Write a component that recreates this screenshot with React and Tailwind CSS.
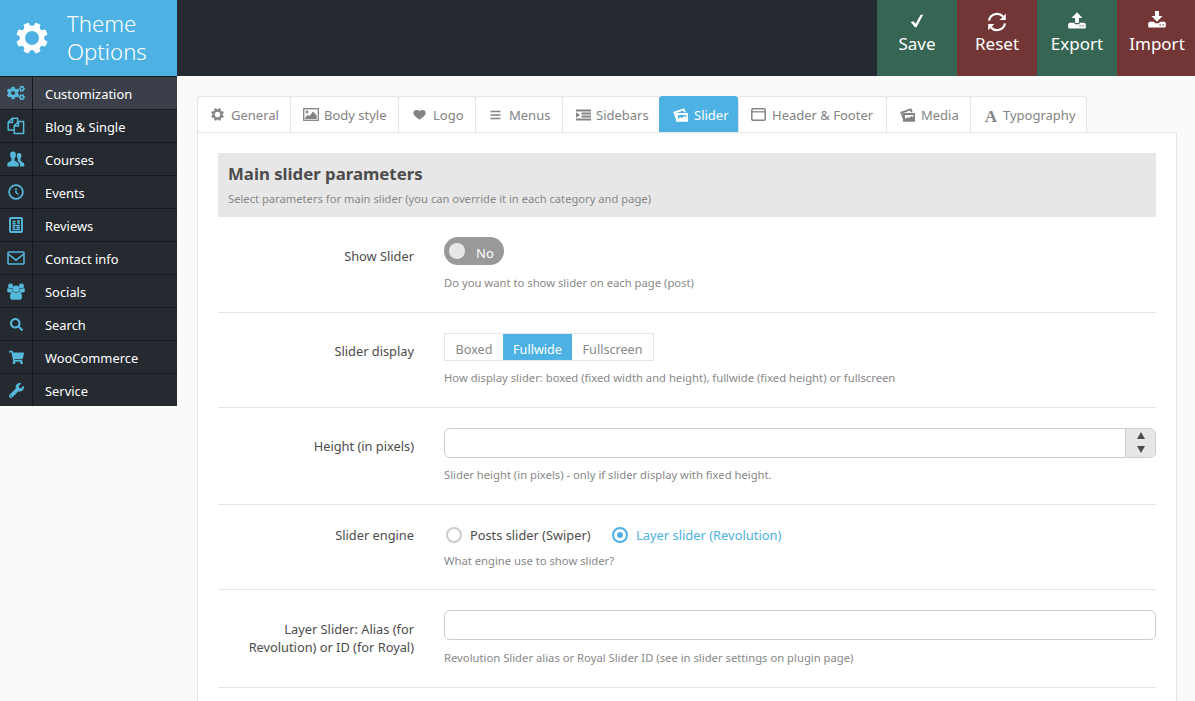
import React from "react";
import { FaCogs, FaSearch, FaShoppingCart, FaWrench } from "react-icons/fa";

const teeth = [22.5, 67.5, 112.5, 157.5, 202.5, 247.5, 292.5, 337.5];

function Gear({ className }) {
  return (
    <svg viewBox="-16 -16 32 32" className={className} fill="currentColor">
      <circle r="9.6" fill="none" stroke="currentColor" strokeWidth="5.200" />
      {teeth.map((a) => (
        <path key={a} transform={`rotate(${a})`} d="M-4.200-11L-2.800-13.200L-3-15.300Q0-16.400 3-15.300L2.800-13.200L4.200-11Z" />
      ))}
    </svg>
  );
}

function Files({ className }) {
  return (
    <svg viewBox="0 0 18 18" className={className} fill="none" stroke="currentColor" strokeWidth="1.5" strokeLinejoin="round">
      <path d="M7 13H1.2V5.3L5.3 1.2H10.6V4.4M5.5 1.4V5.4H1.4" />
      <path d="M11.4 4.6H16.6V16.4H7.2V8.8ZM11.5 4.8V9H7.4" />
    </svg>
  );
}

function TwoUsers({ className }) {
  return (
    <svg viewBox="0 0 18 16" className={className} fill="currentColor">
      <path d="M6 .6C8.200.6 9 2.200 8.900 4.200C8.800 5.600 8.200 6.600 7.600 7.400V9.200C8 10.400 11.500 10.800 11.700 13V15.400H.4V13C.6 10.800 4 10.400 4.500 9.200V7.400C3.800 6.600 3.200 5.600 3.100 4.200C3 2.200 3.800.6 6 .6Z" />
      <path d="M12 2C13.900 2 14.500 3.200 14.400 5C14.300 6.200 13.900 7 13.400 7.700V9.500C13.900 10.700 17 11.200 17.300 13.200V15.400H12.900V13C12.800 11.200 11.300 10.500 10.200 9.900C10.700 9.500 10.900 9.200 10.900 8.700V7.700C10.300 7 9.900 6.200 9.800 5C9.700 3.200 10.300 2 12 2Z" />
    </svg>
  );
}

function Clock({ className }) {
  return (
    <svg viewBox="0 0 16 16" className={className} fill="none" stroke="currentColor" strokeWidth="1.700">
      <circle cx="8" cy="8" r="6.900" />
      <path d="M8 4V8.500L10.500 10.500" strokeWidth="1.300" />
    </svg>
  );
}

function Book({ className }) {
  return (
    <svg viewBox="0 0 14 16" className={className} fill="none" stroke="currentColor">
      <rect x="1" y="1" width="12" height="14" rx="1" strokeWidth="1.900" />
      <path d="M3.500 4.500H6.500M8 4H11M8 6H11M3.500 6.500H6.500M3.500 8.500H11M3.500 10.500H6M7.500 10.500H11M3.500 12.500H11" strokeWidth="1.300" />
    </svg>
  );
}

function Envelope({ className }) {
  return (
    <svg viewBox="0 0 18 14" className={className} fill="none" stroke="currentColor" strokeWidth="1.500" strokeLinejoin="round">
      <rect x="1" y="1" width="16" height="12" rx="1" />
      <path d="M1.200 3L9 9.200L16.800 3" />
    </svg>
  );
}

function Crowd({ className }) {
  return (
    <svg viewBox="0 0 18 17" className={className} fill="currentColor">
      <circle cx="3.600" cy="2.900" r="2.500" />
      <circle cx="14.400" cy="2.900" r="2.500" />
      <path d="M1.300 5Q3.600 6.600 5.300 5.400Q5.200 7.800 6.200 9.400H1.800Q.1 9.400.1 7.400Q.1 5 1.300 5ZM16.700 5Q14.400 6.600 12.700 5.400Q12.800 7.800 11.800 9.400H16.200Q17.900 9.400 17.900 7.400Q17.900 5 16.700 5Z" />
      <circle cx="9" cy="6" r="3.500" />
      <path d="M5.600 8.800Q9 11 12.400 8.800Q15 9.500 15 14Q15 16.800 12.600 16.800H5.400Q3 16.800 3 14Q3 9.500 5.600 8.800Z" />
    </svg>
  );
}

function Check({ className }) {
  return (
    <svg viewBox="0 0 14 14" className={className} fill="currentColor">
      <path d="M.7 7.900L3.600 7.300L5.500 9.800L10.500.9L13.300.6L6.500 13.200H4.900Z" />
    </svg>
  );
}

function Cycle({ className }) {
  return (
    <svg viewBox="0 0 20 20" className={className} fill="none" stroke="currentColor" strokeWidth="2.200">
      <path d="M2 8.600A8.100 8.100 0 0 1 16 4.600M18 11.400A8.100 8.100 0 0 1 4 15.400" />
      <path d="M18.800 1.800V8H12.600ZM1.200 18.200V12H7.400Z" fill="currentColor" stroke="none" />
    </svg>
  );
}

function Tray({ className, down }) {
  return (
    <svg viewBox="0 0 18 17" className={className} fill="currentColor">
      <path d={down ? "M7 0H11V5H14.500L9 10.800L3.500 5H7Z" : "M9 .2L14.500 6H11V11H7V6H3.500Z"} />
      <path fillRule="evenodd" d="M1.400 10.700H5.800L7.300 12.300H10.700L12.200 10.700H16.600L17.800 12V15.500Q17.800 16.500 16.800 16.500H1.200Q.2 16.500.2 15.500V12ZM11.500 13.300V14.500H12.700V13.300ZM14.500 13.300V14.500H15.700V13.300Z" />
    </svg>
  );
}

function Picture({ className }) {
  return (
    <svg viewBox="0 0 16 13" className={className} fill="currentColor">
      <rect x=".7" y=".7" width="14.600" height="11.600" fill="none" stroke="currentColor" strokeWidth="1.300" />
      <circle cx="4" cy="4" r="1.400" />
      <path d="M2.300 11V9L5 7L6.500 8L10 3.500L13.700 7.500V11Z" />
    </svg>
  );
}

function Heart({ className }) {
  return (
    <svg viewBox="0 0 14 12" className={className} fill="currentColor">
      <path d="M7 2C8 .3 11.500-.1 13 1.600C14.500 4 13 6.500 10.500 8.500C9 9.700 7.600 10.400 7 11.200C6.400 10.400 5 9.700 3.500 8.500C1 6.500-.5 4 1 1.600C2.500-.1 6 .3 7 2Z" />
    </svg>
  );
}

function Lines({ className }) {
  return (
    <svg viewBox="0 0 11 10" className={className} stroke="currentColor" strokeWidth="1.400">
      <path d="M.5 1.500H10.500M.5 5H10.500M.5 8.500H10.500" />
    </svg>
  );
}

function Indented({ className }) {
  return (
    <svg viewBox="0 0 15 12" className={className} fill="currentColor">
      <path d="M0 .5H15V2.500H0ZM5.500 3.500H15V5.500H5.500ZM5.500 6.500H15V8.500H5.500ZM0 9.500H15V11.500H0ZM0 3.200L4 6L0 8.800Z" />
    </svg>
  );
}

function Windowed({ className }) {
  return (
    <svg viewBox="0 0 15 13" className={className} fill="none" stroke="currentColor">
      <rect x=".8" y=".8" width="13.400" height="11.400" rx="1.200" strokeWidth="1.500" />
      <path d="M1 3.800H14" strokeWidth="1.300" />
    </svg>
  );
}

function Photos({ className }) {
  return (
    <svg viewBox="0 0 15 14" className={className} fill="currentColor">
      <path d="M.2 4L11.200.2L12.700 4.200H10.800L10.200 2.600L2.400 5.300L3 7V11.500Z" />
      <path fillRule="evenodd" d="M3 5H15V13.700H3ZM5 7V11L7.300 9.200L9.200 10L11.300 8L13.200 9.200V7Z" />
    </svg>
  );
}

function LetterA({ className }) {
  return <span className={`${className} pt-[3px] text-center font-['Liberation_Serif',serif] text-[17px] font-bold leading-[15px]`}>A</span>;
}

const menu = [
  ["Customization", FaCogs, "size-[18px]"],
  ["Blog & Single", Files, "size-[18px]"],
  ["Courses", TwoUsers, "h-4 w-[18px]"],
  ["Events", Clock, "size-4"],
  ["Reviews", Book, "h-4 w-[14px]"],
  ["Contact info", Envelope, "h-[14px] w-[18px]"],
  ["Socials", Crowd, "h-[17px] w-[18px]"],
  ["Search", FaSearch, "size-[13px]"],
  ["WooCommerce", FaShoppingCart, "size-[15px]"],
  ["Service", FaWrench, "size-[15px]"],
];

const actions = [
  ["Save", <Check className="mb-1 size-[14px]" />, "bg-[#366554]"],
  ["Reset", <Cycle className="size-5" />, "bg-[#733636]"],
  ["Export", <Tray className="mb-[3px] h-[17px] w-[18px]" />, "bg-[#366554]"],
  ["Import", <Tray down className="mb-1 h-[17px] w-[18px]" />, "bg-[#733636]"],
];

const tabs = [
  ["General", Gear, "size-[13px]", "w-[94px] -mr-px", "pl-[13px]", "gap-[7px]"],
  ["Body style", Picture, "h-[13px] w-4", "w-[109px] -mr-px", "pl-[12px]", "gap-[5px]"],
  ["Logo", Heart, "h-3 w-[13px]", "w-[78px] -mr-px", "pl-[14px]", "gap-[7px]"],
  ["Menus", Lines, "h-[10px] w-[11px]", "w-[88px] -mr-px", "pl-[14px]", "gap-[8px]"],
  ["Sidebars", Indented, "h-3 w-[15px]", "w-[98px] -mr-px", "pl-[13px]", "gap-[5px]"],
  ["Slider", Photos, "h-[14px] w-[15px]", "w-[79px]", "pl-[14px]", "gap-[6px]"],
  ["Header & Footer", Windowed, "h-[13px] w-[15px]", "w-[149px] -mr-px", "pl-[12px]", "gap-[6px]"],
  ["Media", Photos, "h-[14px] w-[15px]", "w-[85px] -mr-px", "pl-[13px]", "gap-[6px]"],
  ["Typography", LetterA, "w-[14px]", "w-[117px]", "pl-[13px]", "gap-[5px]"],
];

function Row({ label, height, labelTop, children, hint, hintTop }) {
  return (
    <section className={`flex border-b border-[#e5e5e5] ${height}`}>
      <div className={`w-[196px] shrink-0 text-right text-[12.8px] leading-[18px] text-[#4c4c4c] ${labelTop}`}>{label}</div>
      <div className="ml-[30px] flex-1 pt-5">
        {children}
        <p className={`text-[11.25px] leading-4 text-[#888] ${hintTop}`}>{hint}</p>
      </div>
    </section>
  );
}

export default function App() {
  return (
    <div className="flex h-[701px] w-[1195px] flex-col overflow-hidden bg-[#fafafa] font-['Noto_Sans',sans-serif]">
      <header className="flex h-[76px] shrink-0 bg-[#252932] text-white">
        <div className="flex w-[177px] items-center bg-[#4db2e3] pl-4">
          <Gear className="size-8" />
          <h1 className="ml-[19px] text-[22.2px] font-light leading-7">Theme<br />Options</h1>
        </div>
        <nav className="ml-auto flex w-[318px]">
          {actions.map(([label, icon, color]) => (
            <button key={label} className={`flex w-20 shrink-0 flex-col items-center ${color}`}>
              <span className="flex h-8 items-end">{icon}</span>
              <span className="text-[17px] leading-6">{label}</span>
            </button>
          ))}
        </nav>
      </header>
      <div className="flex min-h-0 flex-1">
        <aside className="h-[330px] w-[177px] bg-[#252930]">
          {menu.map(([label, Icon, size], i) => (
            <div key={label} className={`flex h-[33px] border-t border-[#17191c] ${i === 0 ? "bg-[#3a3f49]" : ""}`}>
              <span className="flex w-[33px] items-center justify-center border-r border-[#17191c] text-[#56b9dc]"><Icon className={size} /></span>
              <span className="pl-3 pt-2 text-[12.9px] leading-[18px] text-white">{label}</span>
            </div>
          ))}
        </aside>
        <main className="ml-5 mt-5 w-[980px]">
          <nav className="flex h-9">
            {tabs.map(([label, Icon, size, width, pad, gap]) => (
              <a
                key={label}
                className={`flex shrink-0 items-center whitespace-nowrap rounded-t-[3px] text-[13px] ${width} ${pad} ${gap} ${
                  label === "Slider" ? "z-10 bg-[#4db2e3] pt-px text-white" : "border border-b-0 border-[#e5e5e5] bg-white text-[#838383]"
                }`}
              >
                <Icon className={`shrink-0 ${size}`} />
                <span className="pt-0.5">{label}</span>
              </a>
            ))}
          </nav>
          <div className="h-[600px] border border-[#e5e5e5] bg-white p-5">
            <div className="h-16 bg-[#e7e7e7] px-[10px] pt-[9px]">
              <h2 className="text-[16.8px] font-bold leading-6 text-[#4c4c4c]">Main slider parameters</h2>
              <p className="pt-[5px] text-[11.2px] leading-4 text-[#888]">Select parameters for main slider (you can override it in each category and page)</p>
            </div>
            <Row label="Show Slider" height="h-24" labelTop="pt-[30px]" hintTop="mt-[10px]" hint="Do you want to show slider on each page (post)">
              <div className="flex h-7 w-[60px] items-center rounded-full bg-[#999] pl-[5px] text-[13px] text-white">
                <span className="size-4 rounded-full bg-[#e7e7e7]" />
                <span className="ml-[11px] pt-[3px] leading-[18px]">No</span>
              </div>
            </Row>
            <Row label="Slider display" height="h-[95px]" labelTop="pt-[29px]" hintTop="mt-[9px]" hint="How display slider: boxed (fixed width and height), fullwide (fixed height) or fullscreen">
              <div className="flex h-7 w-[210px] border border-[#e5e5e5] text-center text-[12.6px] leading-[31px] text-[#888]">
                <span className="w-[58px]">Boxed</span>
                <span className="h-[26px] w-[69px] bg-[#4db2e3] text-white">Fullwide</span>
                <span className="flex-1">Fullscreen</span>
              </div>
            </Row>
            <Row label="Height (in pixels)" height="h-[97px]" labelTop="pt-[29px]" hintTop="mt-[9px]" hint="Slider height (in pixels) - only if slider display with fixed height.">
              <div className="flex h-[30px] justify-end overflow-hidden rounded-md border border-[#ccc]">
                <div className="flex w-[30px] flex-col items-center justify-center gap-[7px] border-l border-[#ccc] bg-[#e7e7e7] pb-0.5 text-[#4c4c4c]">
                  <svg viewBox="0 0 8 7" className="h-[7px] w-2" fill="currentColor"><path d="M4 0L8 7H0Z" /></svg>
                  <svg viewBox="0 0 8 7" className="h-[7px] w-2" fill="currentColor"><path d="M0 0H8L4 7Z" /></svg>
                </div>
              </div>
            </Row>
            <Row label="Slider engine" height="h-[85px]" labelTop="pt-[21px]" hintTop="mt-[9px]" hint="What engine use to show slider?">
              <div className="flex h-[19px] items-center pl-0.5 text-[12.8px] leading-[18px] text-[#4c4c4c]">
                <span className="size-4 rounded-full border-2 border-[#ccc]" />
                <span className="ml-2 w-[142px]">Posts slider (Swiper)</span>
                <span className="flex size-4 items-center justify-center rounded-full border-2 border-[#4db2e3]"><span className="size-1.5 rounded-full bg-[#4db2e3]" /></span>
                <span className="ml-2 text-[12.9px] text-[#4db2e3]">Layer slider (Revolution)</span>
              </div>
            </Row>
            <Row label={<>Layer Slider: Alias (for<br />Revolution) or ID (for Royal)</>} height="h-[98px]" labelTop="pt-[30px]" hintTop="mt-[10px]" hint="Revolution Slider alias or Royal Slider ID (see in slider settings on plugin page)">
              <div className="h-[30px] rounded-md border border-[#ccc]" />
            </Row>
          </div>
        </main>
      </div>
    </div>
  );
}
